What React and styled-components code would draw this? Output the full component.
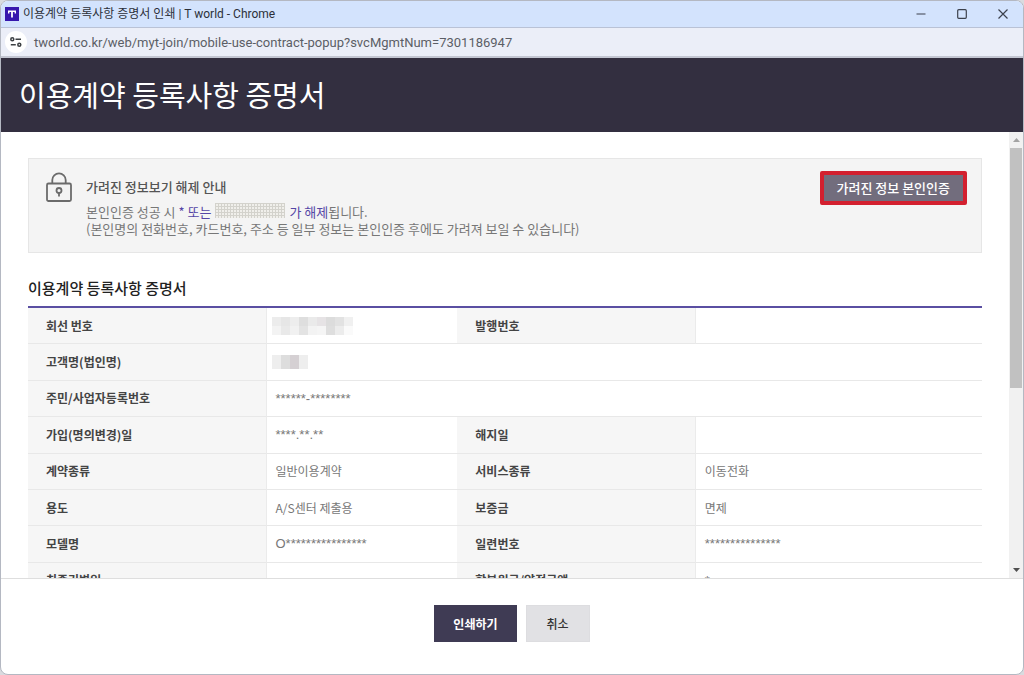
import styled, { createGlobalStyle } from 'styled-components';

const GlobalStyle = createGlobalStyle`
    * {
        box-sizing: border-box;
    }

    body {
        margin: 0;
        background: #d9dbdf;
        font-family: "Noto Sans CJK KR", sans-serif;
    }

    button {
        font-family: inherit;
    }
`

const Window = styled.div`
    display: flex;
    flex-direction: column;
    height: 100vh;
    border: 1px solid #b4b8c2;
    border-radius: 8px;
    overflow: hidden;
    background: #fff;
`

const TitleBar = styled.div`
    display: flex;
    flex: none;
    align-items: center;
    height: 27px;
    padding-left: 4px;
    background: #d3e3fd;
    border-bottom: 1px solid #b9c2d6;
`

const WindowTitle = styled.span`
    flex: 1;
    margin-left: 4px;
    font-family: Roboto, "Noto Sans CJK KR", sans-serif;
    font-size: 12px;
    line-height: 20px;
    color: #2c3039;
`

const WindowButton = styled.button`
    display: flex;
    align-items: center;
    justify-content: center;
    width: 41px;
    height: 26px;
    padding: 0;
    border: 0;
    background: none;
    color: #3c414c;
`

const AddressBar = styled.div`
    display: flex;
    flex: none;
    align-items: center;
    height: 30px;
    padding-left: 4px;
    background: #ebeef8;
    border-bottom: 2px solid #c3c6d2;
`

const SiteInfo = styled.button`
    display: flex;
    align-items: center;
    justify-content: center;
    width: 22px;
    height: 22px;
    padding: 0;
    border: 0;
    border-radius: 50%;
    background: #fff;
`

const Url = styled.span`
    margin-left: 7px;
    font-family: Roboto, sans-serif;
    font-size: 13px;
    color: #5b5e66;
`

const PageHeader = styled.header`
    display: flex;
    flex: none;
    align-items: center;
    height: 74px;
    padding: 0 18px 2px;
    background: #332f40;
`

const PageTitle = styled.h1`
    margin: 0;
    font-size: 29px;
    font-weight: 400;
    line-height: 40px;
    color: #fff;
`

const Scroller = styled.div`
    display: flex;
    flex: 1;
    min-height: 0;
`

const Content = styled.main`
    flex: 1;
    padding: 26px 27px 0;
    overflow: hidden;
`

const Notice = styled.section`
    display: flex;
    align-items: flex-start;
    height: 95px;
    padding: 12px 14px 0 17px;
    border: 1px solid #e6e6e6;
    background: #f4f4f4;
`

const NoticeBody = styled.div`
    flex: 1;
    margin-left: 14px;
    padding-top: 6px;
`

const NoticeTitle = styled.h2`
    margin: 0 0 6px;
    font-size: 13px;
    font-weight: 500;
    line-height: 20px;
    color: #555;
`

const NoticeText = styled.p`
    margin: 0;
    font-size: 13px;
    line-height: 17px;
    color: #777;
`

const Accent = styled.span`
    color: #5546a6;
`

const Hatch = styled.span`
    display: inline-block;
    width: 70px;
    height: 15px;
    margin: 0 4px;
    vertical-align: -1px;
    background-color: #f0efeb;
    background-image:
        linear-gradient(90deg, #d3d2cc 1px, transparent 1px),
        linear-gradient(#d3d2cc 1px, transparent 1px);
    background-size: 3px 3px;
`

const VerifyButton = styled.button`
    height: 34px;
    padding: 0 13px;
    border: 4px solid #d3202f;
    border-radius: 2px;
    background: #726d7d;
    font-size: 13px;
    font-weight: 500;
    line-height: 24px;
    color: #fff;
`

const SectionTitle = styled.h2`
    margin: 23px 0 6px;
    font-size: 15px;
    font-weight: 500;
    line-height: 24px;
    color: #222;
`

const Table = styled.table`
    width: 100%;
    height: 293px;
    table-layout: fixed;
    border-collapse: separate;
    border-spacing: 0;
    border-top: 2px solid #5a4fa2;
    font-size: 12px;
    line-height: 18px;
`

const Col = styled.col`
    width: ${(props) => props.$width};
`

const HeadCell = styled.th`
    height: 36px;
    padding: 0 18px;
    border-right: 1px solid #ebebeb;
    border-bottom: 1px solid #e8e8e8;
    background: #f6f6f6;
    font-weight: 700;
    text-align: left;
    color: #444;
`

const Cell = styled.td`
    padding: 0 9px;
    border-bottom: 1px solid #e8e8e8;
    color: #777;
`

const Masked = styled.span`
    font-family: "Liberation Sans", sans-serif;
    font-size: 13px;
`

const Mosaic = styled.svg`
    display: block;
    margin-left: -4px;
`

const ScrollBar = styled.div`
    display: flex;
    flex-direction: column;
    width: 14px;
    background: #f1f1f1;
`

const ScrollArrow = styled.button`
    display: flex;
    flex: none;
    align-items: center;
    justify-content: center;
    height: 16px;
    padding: 0;
    border: 0;
    background: none;
    color: ${(props) => (props.$active ? '#505050' : '#a3a3a3')};
`

const ScrollTrack = styled.div`
    flex: 1;
`

const ScrollThumb = styled.div`
    width: 12px;
    height: 58%;
    margin-left: 1px;
    background: #c1c1c1;
`

const Footer = styled.footer`
    display: flex;
    flex: none;
    justify-content: center;
    gap: 9px;
    height: 96px;
    padding-top: 26px;
    border-top: 1px solid #dedede;
`

const FooterButton = styled.button`
    height: 37px;
    padding: 0 ${(props) => (props.$primary ? '19px' : '20px')};
    border: ${(props) => (props.$primary ? '0' : '1px solid #dddde0')};
    background: ${(props) => (props.$primary ? '#3f3b54' : '#e1e1e4')};
    font-size: 12px;
    font-weight: ${(props) => (props.$primary ? '700' : '500')};
    color: ${(props) => (props.$primary ? '#fff' : '#333')};
`

const TIcon = () => (
    <svg width="14" height="14" viewBox="0 0 14 14" aria-hidden="true">
        <rect width="14" height="14" fill="#3617ad" />
        <path d="M3 3.5h8v3H9.6V5.1H7.9V10.5H6.1V5.1H4.4v1.4H3z" fill="#fff" />
    </svg>
)

const TuneIcon = () => (
    <svg width="12" height="10" viewBox="0 0 12 10" fill="none" stroke="#3c4043" strokeWidth="1.5" aria-hidden="true">
        <circle cx="2.3" cy="2.3" r="1.5" />
        <path d="M5.5 2.3H11M0.8 7.7h5" />
        <circle cx="9.3" cy="7.7" r="1.5" />
    </svg>
)

const LockIcon = () => (
    <svg width="26" height="32" viewBox="0 0 26 32" fill="none" stroke="#6b6b6b" strokeWidth="1.8" aria-hidden="true">
        <path d="M6.3 12.5V9a6.7 6.7 0 0 1 13.4 0v3.5" />
        <rect x="1" y="12.5" width="24" height="17.5" rx="1.5" />
        <circle cx="13" cy="19.5" r="2.5" />
        <path d="M13 22v3.5" />
    </svg>
)

const blocks = {
    phone: [
        ['#ececec', '#e6e6e6', '#ededed', '#dedede', '#eaeaea', '#e6e3e5', '#dcdcdc', '#e2e2e2', '#f0f0f0'],
        ['#f3f3f3', '#e9e9e9', '#f1f1f1', '#e3e3e3', '#f3f3f3', '#f5f5f5', '#dedede', '#ececec', '#fafafa'],
    ],
    name: [['#eeeeee', '#dddddd', '#d5d0d3', '#eeeeee']],
}

const PixelBlocks = ({ rows, size, label }) => (
    <Mosaic width={rows[0].length * 9} height={rows.length * size} role="img" aria-label={label}>
        {rows.map((row, y) =>
            row.map((fill, x) => (
                <rect key={`${x}-${y}`} x={x * 9} y={y * size} width="9" height={size} fill={fill} />
            ))
        )}
    </Mosaic>
)

const rows = [
    [['회선 번호', <PixelBlocks rows={blocks.phone} size={9} label="회선 번호 가림" />], ['발행번호', '']],
    [['고객명(법인명)', <PixelBlocks rows={blocks.name} size={14} label="고객명 가림" />]],
    [['주민/사업자등록번호', <Masked>******-********</Masked>]],
    [['가입(명의변경)일', <Masked>****.**.**</Masked>], ['해지일', '']],
    [['계약종류', '일반이용계약'], ['서비스종류', '이동전화']],
    [['용도', 'A/S센터 제출용'], ['보증금', '면제']],
    [['모델명', <Masked>O****************</Masked>], ['일련번호', <Masked>***************</Masked>]],
    [['최종기변일', ''], ['할부원금/약정금액', <Masked>*</Masked>]],
]

const ContractTable = () => (
    <Table>
        <colgroup>
            <Col $width="25%" />
            <Col $width="20%" />
            <Col $width="25%" />
            <Col $width="30%" />
        </colgroup>
        <tbody>
            {rows.map((row) => (
                <tr key={row[0][0]}>
                    {row.map(([label, value]) => [
                        <HeadCell key={label} scope="row">{label}</HeadCell>,
                        <Cell key={`${label}-value`} colSpan={row.length === 1 ? 3 : 1}>{value}</Cell>,
                    ])}
                </tr>
            ))}
        </tbody>
    </Table>
)

export default function App() {
    return (
        <>
            <GlobalStyle />
            <Window>
                <TitleBar>
                    <TIcon />
                    <WindowTitle>이용계약 등록사항 증명서 인쇄 | T world - Chrome</WindowTitle>
                    <WindowButton aria-label="최소화">
                        <svg width="10" height="10" stroke="currentColor" strokeWidth="1.2"><path d="M0.5 5h9" /></svg>
                    </WindowButton>
                    <WindowButton aria-label="최대화">
                        <svg width="10" height="10" fill="none" stroke="currentColor" strokeWidth="1.2">
                            <rect x="0.7" y="0.7" width="8.6" height="8.6" rx="1" />
                        </svg>
                    </WindowButton>
                    <WindowButton aria-label="닫기">
                        <svg width="10" height="10" stroke="currentColor" strokeWidth="1.2"><path d="M0.5 0.5l9 9M9.5 0.5l-9 9" /></svg>
                    </WindowButton>
                </TitleBar>
                <AddressBar>
                    <SiteInfo aria-label="사이트 정보 보기"><TuneIcon /></SiteInfo>
                    <Url>tworld.co.kr/web/myt-join/mobile-use-contract-popup?svcMgmtNum=7301186947</Url>
                </AddressBar>
                <PageHeader>
                    <PageTitle>이용계약 등록사항 증명서</PageTitle>
                </PageHeader>
                <Scroller>
                    <Content>
                        <Notice>
                            <LockIcon />
                            <NoticeBody>
                                <NoticeTitle>가려진 정보보기 해제 안내</NoticeTitle>
                                <NoticeText>
                                    본인인증 성공 시 <Accent>* 또는</Accent>
                                    <Hatch />
                                    <Accent>가 해제</Accent>됩니다.
                                </NoticeText>
                                <NoticeText>
                                    (본인명의 전화번호, 카드번호, 주소 등 일부 정보는 본인인증 후에도 가려져 보일 수 있습니다)
                                </NoticeText>
                            </NoticeBody>
                            <VerifyButton>가려진 정보 본인인증</VerifyButton>
                        </Notice>
                        <SectionTitle>이용계약 등록사항 증명서</SectionTitle>
                        <ContractTable />
                    </Content>
                    <ScrollBar>
                        <ScrollArrow aria-label="위로">
                            <svg width="7" height="4"><path d="M0 4L3.5 0L7 4z" fill="currentColor" /></svg>
                        </ScrollArrow>
                        <ScrollTrack><ScrollThumb /></ScrollTrack>
                        <ScrollArrow $active aria-label="아래로">
                            <svg width="7" height="4"><path d="M0 0L3.5 4L7 0z" fill="currentColor" /></svg>
                        </ScrollArrow>
                    </ScrollBar>
                </Scroller>
                <Footer>
                    <FooterButton $primary>인쇄하기</FooterButton>
                    <FooterButton>취소</FooterButton>
                </Footer>
            </Window>
        </>
    )
}
